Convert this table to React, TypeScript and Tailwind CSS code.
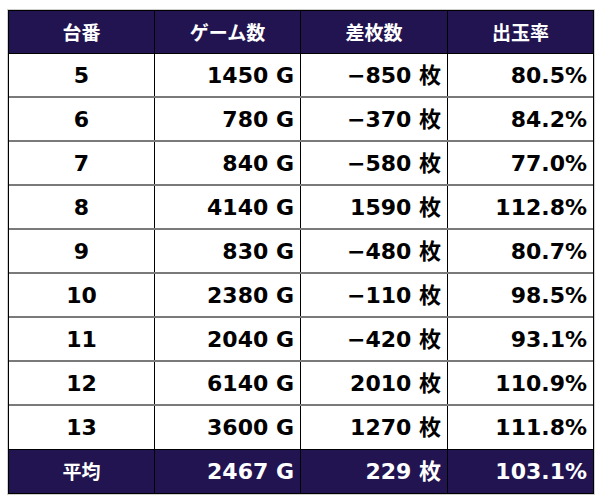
import React from "react";

const rows = [
  ["5", "1450 G", "−850 枚", "80.5%"],
  ["6", "780 G", "−370 枚", "84.2%"],
  ["7", "840 G", "−580 枚", "77.0%"],
  ["8", "4140 G", "1590 枚", "112.8%"],
  ["9", "830 G", "−480 枚", "80.7%"],
  ["10", "2380 G", "−110 枚", "98.5%"],
  ["11", "2040 G", "−420 枚", "93.1%"],
  ["12", "6140 G", "2010 枚", "110.9%"],
  ["13", "3600 G", "1270 枚", "111.8%"],
];

const num = { fontFamily: '"DejaVu Sans", Verdana, "Noto Sans CJK JP", sans-serif' };
const jp = { fontFamily: '"Noto Sans CJK JP", sans-serif' };

export default function App() {
  return (
    <div className="w-[600px] h-[500px] bg-white pt-[9px] pl-[7px]">
      <div className="w-[588px] border border-[#cfcfcf]">
        <div className="w-[586px] border-[1.5px] border-black">
          <div className="grid grid-cols-[146px_146px_147px_1fr] h-[43px] bg-[#221450] text-white border-b border-black">
            {["台番", "ゲーム数", "差枚数", "出玉率"].map((h, i) => (
              <div
                key={i}
                style={jp}
                className={`flex items-center justify-center text-[19px] font-bold ${i < 3 ? "border-r border-black" : ""}`}
              >
                {h}
              </div>
            ))}
          </div>
          {rows.map((r, ri) => (
            <div
              key={ri}
              className={`grid grid-cols-[146px_146px_147px_1fr] h-[44px] bg-white text-black ${ri < rows.length - 1 ? "border-b-2 border-[#7a7a7a]" : "border-b border-black"}`}
            >
              {r.map((c, i) => (
                <div
                  key={i}
                  style={num}
                  className={`flex items-center text-[22px] font-bold ${i === 0 ? "justify-center" : "justify-end pr-[6px]"} ${i < 3 ? "border-r border-black" : ""}`}
                >
                  {c}
                </div>
              ))}
            </div>
          ))}
          <div className="grid grid-cols-[146px_146px_147px_1fr] h-[43px] bg-[#221450] text-white">
            <div style={jp} className="flex items-center justify-center text-[19px] font-bold border-r border-black">
              平均
            </div>
            {["2467 G", "229 枚", "103.1%"].map((c, i) => (
              <div
                key={i}
                style={num}
                className={`flex items-center justify-end pr-[6px] text-[22px] font-bold ${i < 2 ? "border-r border-black" : ""}`}
              >
                {c}
              </div>
            ))}
          </div>
        </div>
      </div>
    </div>
  );
}
